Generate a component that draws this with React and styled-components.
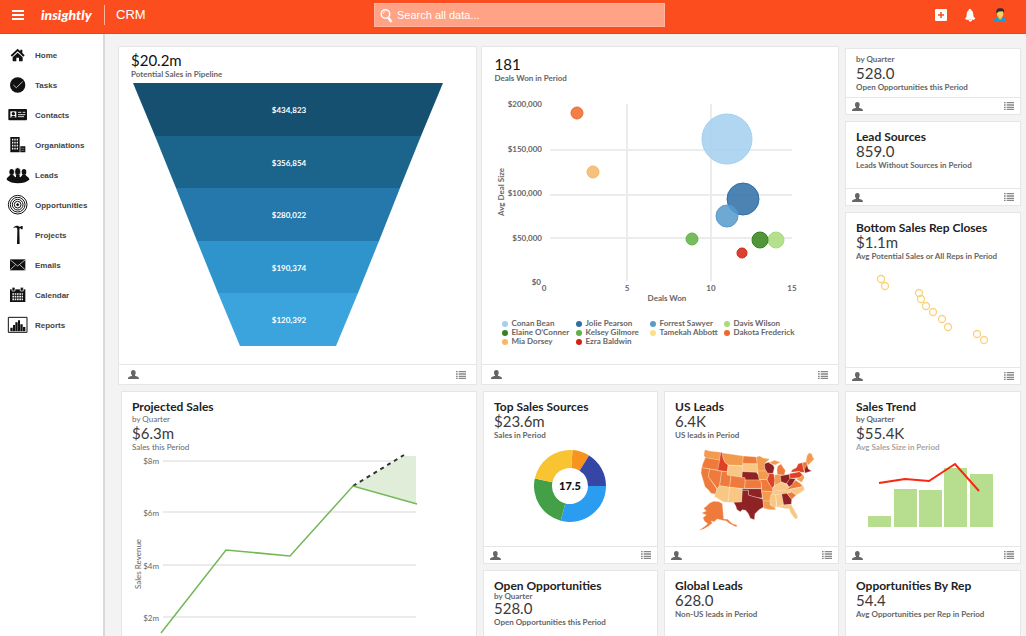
import React from 'react'
import styled, { createGlobalStyle } from 'styled-components'

const DARK = '#8e2224'
const RED = '#dd4227'
const DEEP = '#ee7a3b'
const MID = '#f29a4d'
const PALE = '#f8c784'

const states = [
  [MID, '31,14 43,18 77,22 74,45 33,40 27,32 28,20'],
  [DEEP, '31,38 74,45 70,76 20,68 24,55'],
  [DEEP, '20,68 44,72 40,95 66,133 62,148 48,145 40,134 30,125 24,104 18,84'],
  [DEEP, '44,72 80,79 74,122 67,131 40,95'],
  [RED, '77,22 83,24 84,38 90,52 99,60 97,80 68,76 73,50'],
  [MID, '83,24 145,33 143,62 100,60 90,52 84,38'],
  [PALE, '100,60 144,64 141,97 96,92'],
  [DEEP, '80,79 97,80 96,90 108,92 104,127 74,122'],
  [DEEP, '108,92 151,98 149,131 104,127'],
  [PALE, '74,122 104,127 99,172 84,170 58,154 66,133'],
  [PALE, '104,127 142,131 140,171 99,172'],
  [DEEP, '145,33 184,36 187,56 143,56'],
  [PALE, '143,56 187,57 188,80 186,82 142,80'],
  [DARK, '142,80 184,82 190,90 194,105 151,105 150,98 141,97'],
  [DEEP, '151,105 195,105 199,112 199,130 149,130'],
  [DARK, '142,131 199,131 202,159 188,158 172,154 160,150 160,136 142,136'],
  [DARK, '142,136 160,136 160,150 172,154 188,158 204,162 206,186 192,194 180,206 178,224 166,220 160,206 152,196 142,194 136,200 126,194 122,182 116,172 140,171'],
  [MID, '184,36 194,33 204,39 224,42 208,56 210,72 216,78 188,78 187,58'],
  [MID, '188,78 214,78 222,90 214,104 192,103'],
  [DEEP, '193,104 216,104 222,116 232,128 236,140 200,138 199,112'],
  [MID, '200,138 234,140 226,168 204,168'],
  [MID, '204,168 226,168 226,180 238,184 242,194 226,194 206,190'],
  [DARK, '208,56 220,52 234,60 238,68 234,85 218,85 210,72'],
  [RED, '218,85 236,86 240,104 238,122 231,130 220,112 216,102 222,90'],
  [DEEP, '248,64 258,57 266,70 271,76 268,90 247,89 246,74'],
  [MID, '222,53 238,46 256,52 240,60 234,58'],
  [MID, '239,89 256,89 258,112 240,122'],
  [DARK, '256,92 270,90 283,88 285,102 274,116 258,110'],
  [PALE, '231,132 240,122 258,112 274,118 282,128 268,136 234,139'],
  [PALE, '234,139 292,132 276,146 228,150'],
  [PALE, '227,150 242,149 244,186 230,184 224,170'],
  [PALE, '242,149 260,147 266,178 250,186 246,186'],
  [DARK, '260,147 276,145 290,163 289,178 266,180'],
  [PALE, '248,185 266,180 289,179 298,196 308,214 306,222 298,219 287,203 283,191 268,190'],
  [DEEP, '276,145 290,141 304,150 290,163'],
  [PALE, '292,132 326,124 328,134 318,142 304,150 290,141 276,145'],
  [DEEP, '282,128 291,118 302,106 314,114 324,124 268,136'],
  [DARK, '275,115 285,100 302,101 292,118 282,126'],
  [RED, '283,86 314,80 323,90 314,98 285,100'],
  [RED, '288,82 292,74 304,68 310,56 322,53 328,82 318,82 312,79'],
  [DEEP, '322,53 336,50 338,72 326,73'],
  [DARK, '328,73 336,60 340,72 350,78 330,84'],
  [MID, '333,48 336,32 342,24 350,26 354,38 358,42 340,60'],
  [MID, '324,88 328,98 320,112 302,101 316,98'],
  [DEEP, '36,182 44,174 56,169 72,170 82,176 86,222 98,223 112,236 126,240 124,246 104,236 94,228 76,224 66,222 58,230 48,228 52,234 40,244 26,252 12,256 30,244 38,236 28,228 24,218 34,210 20,204 34,198 26,190'],
]

const slices = [
  ['#f7931e', 4, 32],
  ['#3646a5', 32, 90],
  ['#2b9df0', 90, 195],
  ['#43a047', 195, 282],
  ['#f8c431', 282, 364],
]

const people = [
  ['Conan Bean', '#a3cff0'],
  ['Jolie Pearson', '#2f6fa7'],
  ['Forrest Sawyer', '#569bcc'],
  ['Davis Wilson', '#a9db7b'],
  ['Elaine O’Conner', '#35831b'],
  ['Kelsey Gilmore', '#62b146'],
  ['Tamekah Abbott', '#fbe08c'],
  ['Dakota Frederick', '#f0692a'],
  ['Mia Dorsey', '#f5b766'],
  ['Ezra Baldwin', '#d3230f'],
]

const bubbles = [
  [232, 44, 25, '#a3cff0'],
  [248, 104, 16, '#2f6fa7'],
  [232, 121, 11, '#569bcc'],
  [82, 18, 6, '#f0692a'],
  [98, 77, 6, '#f5b766'],
  [197, 144, 6, '#62b146'],
  [281, 145, 8, '#a9db7b'],
  [265, 145, 8, '#35831b'],
  [247, 158, 5, '#d3230f'],
]

const funnel = [
  ['$434,823', '#155070'],
  ['$356,854', '#1b648b'],
  ['$280,022', '#2478ab'],
  ['$190,374', '#2f94cc'],
  ['$120,392', '#3ba4dc'],
]

const closes = [
  [25, 18],
  [29, 25],
  [63, 32],
  [65, 38],
  [70, 45],
  [77, 51],
  [86, 58],
  [92, 66],
  [121, 73],
  [128, 79],
]

const bars = [
  [12, 64],
  [38, 37],
  [63, 38],
  [88, 16],
  [114, 22],
]

const nav = [
  ['Home', (
    <>
      <path d="M29 11 8 31l4 4 17-16 17 16 4-4-7-7V14h-6v5z" />
      <path d="M29 23 14 37v12h11V38h8v11h11V37z" />
    </>
  )],
  ['Tasks', (
    <>
      <circle cx="29" cy="30" r="23" />
      <path d="m16 30 9 8 19-18" fill="none" stroke="#bbb" strokeWidth="3" />
    </>
  )],
  ['Contacts', (
    <>
      <rect x="1" y="12" width="56" height="34" rx="3" />
      <path d="M7 19h18v19H7z" fill="#fff" />
      <circle cx="16" cy="26" r="5" />
      <path d="M9 38c0-8 14-8 14 0z" />
      <path d="M30 22h10M44 22h8M30 29h22M30 35h18" stroke="#ddd" strokeWidth="3" />
    </>
  )],
  ['Organiations', (
    <>
      <path d="M7 6h28v46H7zM37 34h15v18H37z" />
      <path
        d="M12 14h18M12 23h18M12 32h18M12 41h18"
        stroke="#fff"
        strokeDasharray="4 3"
        strokeWidth="5"
      />
      <path d="M40 40h9M40 46h9" stroke="#999" strokeWidth="2" />
    </>
  )],
  ['Leads', (
    <>
      <ellipse cx="11" cy="21" rx="7" ry="9" />
      <ellipse cx="48" cy="21" rx="7" ry="9" />
      <path d="M-4 44c0-9 8-8 10-15h10c2 6 6 5 8 9l12 0c2-4 5-4 7-9h10c2 7 11 6 11 15-15 14-53 14-68 0z" />
      <ellipse cx="29" cy="20" rx="9" ry="12" stroke="#fff" strokeWidth="2" />
      <path d="M24 30h11v6c4 3 9 4 10 9-10 7-22 7-31 0 1-5 6-6 10-9z" />
    </>
  )],
  ['Opportunities', (
    <g fill="none" stroke="#111" strokeWidth="3">
      <circle cx="29" cy="29" r="28" />
      <circle cx="29" cy="29" r="22" />
      <circle cx="29" cy="29" r="16" />
      <circle cx="29" cy="29" r="10" />
      <circle cx="29" cy="29" r="3" fill="#111" />
    </g>
  )],
  ['Projects', (
    <path d="M15 10C18 4 24 1 31 3l3 2h3l3-2h4v10h-4l-3-3h-2l-1 6 1 41h-8l1-41-1-7c-5-2-8-2-12 1z" />
  )],
  ['Emails', (
    <>
      <path d="M6 13h46v33H6z" />
      <path d="m7 15 22 18 22-18M7 44l16-15M51 44 35 29" fill="none" stroke="#fff" strokeWidth="2" />
    </>
  )],
  ['Calendar', (
    <>
      <path d="M6 13h46v38H6z" />
      <path d="M12 7h9v11h-9zM37 7h9v11h-9z" stroke="#fff" strokeWidth="2" />
      <path
        d="M13 27h32M13 35h32M13 43h32"
        stroke="#eee"
        strokeDasharray="5 2"
        strokeWidth="5"
      />
    </>
  )],
  ['Reports', (
    <>
      <path d="M1 7h56v45H1z" fill="#fff" stroke="#111" strokeWidth="3" />
      <path d="M7 38h7v11H7zM15 30h6v19h-6zM22 22h7v27h-7zM30 16h6v33h-6zM37 28h7v21h-7zM45 36h7v13h-7z" />
    </>
  )],
]

const ring = (from, to) => {
  const at = (r, deg) => {
    const a = (deg * Math.PI) / 180
    return `${36 + r * Math.sin(a)} ${36 - r * Math.cos(a)}`
  }
  return `M${at(36, from)}A36 36 0 0 1 ${at(36, to)}L${at(18, to)}A18 18 0 0 0 ${at(18, from)}Z`
}

function CardFooter({ tall }) {
  return (
    <Footer $tall={tall}>
      <IconButton aria-label="Owner">
        <svg width="11" height="9" viewBox="0 0 33 27" fill="#666">
          <ellipse cx="16" cy="8" rx="7" ry="8" />
          <path d="M12 13h9v4c6 2 12 2 12 10H0c0-8 6-8 12-10z" />
        </svg>
      </IconButton>
      <IconButton aria-label="View list">
        <svg width="10" height="8" viewBox="0 0 30 24" stroke="#888" strokeWidth="4">
          <path d="M0 2h5M8 2h22M0 9h5M8 9h22M0 16h5M8 16h22M0 22h5M8 22h22" />
        </svg>
      </IconButton>
    </Footer>
  )
}

function Metric({ title, period, tight, value, caption, muted, thin, strong }) {
  return (
    <header>
      {title && <Title>{title}</Title>}
      {period && <Period $tight={tight} $thin={thin}>{period}</Period>}
      <Value $strong={strong}>{value}</Value>
      <Caption $muted={muted} $thin={thin}>{caption}</Caption>
    </header>
  )
}

function Funnel() {
  // Each band narrows at the same slope towards the bottom of the funnel.
  const edges = [0, 53, 105, 158, 210, 263]
  const inset = (y) => Math.round((y * 107) / 263)
  return (
    <FunnelChart width="310" height="263" viewBox="0 0 310 263">
      {funnel.map(([label, color], i) => {
        const a = edges[i]
        const b = edges[i + 1]
        return (
          <g key={label}>
            <path
              d={`M${inset(a)} ${a}H${310 - inset(a)}L${310 - inset(b)} ${b}H${inset(b)}Z`}
              fill={color}
            />
            <text x="156" y={a + 30} textAnchor="middle">{label}</text>
          </g>
        )
      })}
    </FunnelChart>
  )
}

function DealsChart() {
  return (
    <BubbleChart width="310" height="210" viewBox="0 0 310 210">
      <path
        d="M55 55H297M55 100H297M55 143H297M132 9V186M216 9V186"
        stroke="#ececec"
        strokeWidth="2"
      />
      {bubbles.map(([x, y, r, color]) => (
        <circle
          key={color}
          cx={x}
          cy={y}
          r={r}
          fill={color}
          fillOpacity="0.86"
          stroke={color}
        />
      ))}
      <g textAnchor="end">
        <text x="47" y="12">$200,000</text>
        <text x="47" y="57">$150,000</text>
        <text x="47" y="101">$100,000</text>
        <text x="47" y="146">$50,000</text>
        <text x="46" y="190">$0</text>
      </g>
      <g textAnchor="middle">
        <text x="49" y="196">0</text>
        <text x="132" y="196">5</text>
        <text x="216" y="196">10</text>
        <text x="297" y="196">15</text>
        <text x="172" y="206">Deals Won</text>
        <text transform="translate(9 97) rotate(-90)">Avg Deal Size</text>
      </g>
    </BubbleChart>
  )
}

function ProjectedChart() {
  return (
    <LineChart width="300" height="186" viewBox="0 0 300 186">
      <path
        d="M31 9H284M31 60H284M31 113H284M31 165H284"
        stroke="#ebebeb"
        strokeWidth="2"
      />
      <path d="M221 34 272 4H284V52Z" fill="#e0eed9" />
      <path d="m221 34 51-31" stroke="#333" strokeWidth="2" strokeDasharray="4 4" />
      <path
        d="m29 181 65-83 64 6 63-70 64 18"
        fill="none"
        stroke="#73b757"
        strokeWidth="1.5"
      />
      <g textAnchor="end">
        <text x="27" y="12">$8m</text>
        <text x="27" y="64">$6m</text>
        <text x="27" y="117">$4m</text>
        <text x="27" y="169">$2m</text>
      </g>
      <text textAnchor="middle" transform="translate(9 112) rotate(-90)">Sales Revenue</text>
    </LineChart>
  )
}

function App() {
  return (
    <Page>
      <GlobalStyle />
      <TopBar>
        <Brand>
          <MenuButton aria-label="Menu">
            <svg width="12" height="10" viewBox="0 0 12 10" fill="#fff">
              <path d="M0 0h12v2H0zM0 4h12v2H0zM0 8h12v2H0z" />
            </svg>
          </MenuButton>
          <Logo href="#">insightly</Logo>
          <Product>CRM</Product>
        </Brand>
        <Search>
          <svg width="13" height="15" viewBox="0 0 36 42" fill="none" stroke="#fff">
            <circle cx="15" cy="17" r="12" strokeWidth="4" />
            <path d="M8 17a7 7 0 0 1 7-7" strokeWidth="2" />
            <path d="m23 27 9 12" strokeWidth="7" />
          </svg>
          <SearchInput aria-label="Search" placeholder="Search all data..." />
        </Search>
        <Actions>
          <IconButton aria-label="Add">
            <svg width="12" height="12" viewBox="0 0 12 12">
              <rect width="12" height="12" rx="1" fill="#fff" />
              <path d="M6 3v6M3 6h6" stroke="#fb4a1c" strokeWidth="1.5" />
            </svg>
          </IconButton>
          <IconButton aria-label="Notifications">
            <svg width="12" height="13" viewBox="0 0 36 39" fill="#fff">
              <path d="M18 0c3 0 4 2 4 4 5 3 6 9 6 15 0 5 3 7 6 10l-4 3H7l-4-3c3-3 5-5 5-10 0-7 1-12 6-15 0-2 1-4 4-4zM14 33h10c0 6-10 6-10 0z" />
            </svg>
          </IconButton>
          <IconButton aria-label="Account">
            <svg width="14" height="14" viewBox="-2 0 39 39">
              <path d="M0 39c0-9 5-12 11-13h13c6 1 11 4 11 13z" fill="#1e9ad6" />
              <path d="M13 22h10v7l-5 4-5-4z" fill="#e9b949" />
              <ellipse cx="18" cy="15" rx="9" ry="11" fill="#f6cf65" />
              <path d="M8 15C5 5 11 0 19 1c9-1 12 6 9 14l-2-6-12 1z" fill="#2b2f38" />
            </svg>
          </IconButton>
        </Actions>
      </TopBar>
      <Shell>
        <Sidebar>
          {nav.map(([label, icon]) => (
            <NavLink key={label} href="#">
              <NavIcon viewBox="0 0 60 60">{icon}</NavIcon>
              {label}
            </NavLink>
          ))}
        </Sidebar>
        <Dashboard>
          <Primary>
            <Highlights>
              <Card>
                <FunnelBody>
                  <Metric strong value="$20.2m" caption="Potential Sales in Pipeline" />
                  <Funnel />
                </FunnelBody>
                <CardFooter tall />
              </Card>
              <Card>
                <DealsBody>
                  <Metric strong value="181" caption="Deals Won in Period" />
                  <DealsChart />
                  <Legend>
                    {people.map(([name, color]) => (
                      <LegendItem key={name} $color={color}>{name}</LegendItem>
                    ))}
                  </Legend>
                </DealsBody>
                <CardFooter tall />
              </Card>
            </Highlights>
            <Details>
              <Card>
                <Body>
                  <Metric
                    title="Projected Sales"
                    period="by Quarter"
                    thin
                    value="$6.3m"
                    caption="Sales this Period"
                  />
                  <ProjectedChart />
                </Body>
              </Card>
              <Column>
                <Card>
                  <Body>
                    <Metric title="Top Sales Sources" value="$23.6m" caption="Sales in Period" />
                    <Donut width="72" height="72" viewBox="0 0 72 72">
                      {slices.map(([color, from, to]) => (
                        <path key={color} d={ring(from, to)} fill={color} />
                      ))}
                      <text x="36" y="40" textAnchor="middle">17.5</text>
                    </Donut>
                  </Body>
                  <CardFooter />
                </Card>
                <Card>
                  <Body>
                    <Metric
                      title="Open Opportunities"
                      period="by Quarter"
                      tight
                      value="528.0"
                      caption="Open Opportunities this Period"
                    />
                  </Body>
                </Card>
              </Column>
              <Column>
                <Card>
                  <Body>
                    <Metric title="US Leads" value="6.4K" caption="US leads in Period" />
                    <StateMap width="125" height="106" viewBox="0 -15 375 318">
                      {states.map(([color, points]) => (
                        <polygon key={points} points={points} fill={color} />
                      ))}
                    </StateMap>
                  </Body>
                  <CardFooter />
                </Card>
                <Card>
                  <Body>
                    <Metric title="Global Leads" value="628.0" caption="Non-US leads in Period" />
                  </Body>
                </Card>
              </Column>
            </Details>
          </Primary>
          <Secondary>
            <Card>
              <QuarterBody>
                <Metric period="by Quarter" value="528.0" caption="Open Opportunities this Period" />
              </QuarterBody>
              <CardFooter />
            </Card>
            <Card>
              <SourcesBody>
                <Metric title="Lead Sources" value="859.0" caption="Leads Without Sources in Period" />
              </SourcesBody>
              <CardFooter />
            </Card>
            <Card>
              <Body>
                <Metric
                  title="Bottom Sales Rep Closes"
                  value="$1.1m"
                  caption="Avg Potential Sales or All Reps in Period"
                />
                <Chart width="150" height="106" viewBox="0 0 150 106">
                  {closes.map(([x, y]) => (
                    <circle
                      key={x}
                      cx={x}
                      cy={y}
                      r="3.5"
                      fill="none"
                      stroke="#fbd27c"
                      strokeWidth="1.3"
                    />
                  ))}
                </Chart>
              </Body>
              <CardFooter />
            </Card>
            <Card>
              <Body>
                <Metric
                  title="Sales Trend"
                  period="by Quarter"
                  muted
                  value="$55.4K"
                  caption="Avg Sales Size in Period"
                />
                <Chart width="150" height="94" viewBox="0 0 150 94">
                  {bars.map(([x, y]) => (
                    <rect key={x} x={x} y={y} width="23" height={75 - y} fill="#b6de8e" />
                  ))}
                  <path d="m23 31 26-4 24 2 26-17 24 27" fill="none" stroke="#fb2610" strokeWidth="2" />
                </Chart>
              </Body>
              <CardFooter />
            </Card>
            <Card>
              <Body>
                <Metric
                  title="Opportunities By Rep"
                  value="54.4"
                  caption="Avg Opportunities per Rep in Period"
                />
              </Body>
            </Card>
          </Secondary>
        </Dashboard>
      </Shell>
    </Page>
  )
}

const GlobalStyle = createGlobalStyle`
  * {
    box-sizing: border-box;
  }

  body {
    background: #f3f3f3;
    font-family: Lato, "Liberation Sans", sans-serif;
    margin: 0;
  }
`

const Page = styled.div`
  display: flex;
  flex-direction: column;
  height: 100vh;
  overflow: hidden;
`

const TopBar = styled.header`
  align-items: center;
  background: #fc4d1f;
  border-bottom: 1px solid #f5410c;
  display: flex;
  flex-shrink: 0;
  font-family: "Liberation Sans", Arial, sans-serif;
  height: 34px;
  padding: 0 19px 3px 12px;
`

const Brand = styled.div`
  align-items: center;
  display: flex;
  flex: 0 0 362px;
`

const IconButton = styled.button`
  background: none;
  border: 0;
  cursor: pointer;
  display: flex;
  padding: 0;
`

const MenuButton = styled(IconButton)`
  margin-right: 17px;
`

const Logo = styled.a`
  color: #fff;
  font-family: Lato, sans-serif;
  font-size: 14px;
  font-style: italic;
  font-weight: 900;
  line-height: 20px;
  text-decoration: none;
  width: 63px;
`

const Product = styled.span`
  border-left: 1px solid #ffb39d;
  color: #fff;
  font-size: 13px;
  line-height: 20px;
  padding-left: 11px;
`

const Search = styled.label`
  align-items: center;
  background: #ffa286;
  border: 1px solid #ffb49d;
  display: flex;
  flex: 0 1 291px;
  gap: 4px;
  height: 24px;
  padding: 0 5px;
`

const SearchInput = styled.input`
  background: none;
  border: 0;
  color: #fff;
  flex: 1;
  font-family: inherit;
  font-size: 11px;
  min-width: 0;
  outline: 0;
  padding: 0;

  &::placeholder {
    color: #fff;
    opacity: 1;
  }
`

const Actions = styled.div`
  align-items: center;
  display: flex;
  gap: 17px;
  margin-left: auto;
`

const Shell = styled.div`
  display: flex;
  flex: 1;
  min-height: 0;
`

const Sidebar = styled.nav`
  background: #fff;
  border-right: 2px solid #d9d9d9;
  flex: 0 0 105px;
  padding-top: 6px;
`

const NavLink = styled.a`
  align-items: center;
  color: #444;
  display: flex;
  font-family: "Liberation Sans", Arial, sans-serif;
  font-size: 8px;
  font-weight: bold;
  gap: 7px;
  height: 30px;
  padding-left: 8px;
  text-decoration: none;
`

const NavIcon = styled.svg`
  fill: #111;
  height: 20px;
  overflow: visible;
  width: 20px;
`

const Dashboard = styled.main`
  display: grid;
  flex: 1;
  gap: 6px;
  grid-template-columns: minmax(0, 721fr) minmax(0, 176fr);
  overflow: hidden;
  padding: 12px 5px 0 13px;
`

const Column = styled.div`
  display: flex;
  flex-direction: column;
  gap: 6px;
`

const Primary = styled(Column)``

const Secondary = styled(Column)`
  padding-top: 2px;
`

const Highlights = styled.div`
  display: grid;
  gap: 4px;
  grid-template-columns: repeat(2, minmax(0, 1fr));
`

const Details = styled.div`
  display: grid;
  flex: 1;
  gap: 6px;
  grid-template-columns: minmax(0, 356fr) minmax(0, 175fr) minmax(0, 175fr);
  padding-left: 3px;
`

const Card = styled.section`
  background: #fff;
  border: 1px solid #e6e6e6;
  display: flex;
  flex-direction: column;

  &:last-child {
    flex-grow: 1;
  }
`

const Body = styled.div`
  flex: 1;
  padding: 8px 0 0 10px;
`

const FunnelBody = styled(Body)`
  padding: 5px 12px 18px;
`

const DealsBody = styled(Body)`
  padding: 9px 13px 18px;
`

const QuarterBody = styled(Body)`
  padding: 4px 0 5px 10px;
`

const SourcesBody = styled(Body)`
  padding-bottom: 18px;
`

const Footer = styled.footer`
  align-items: center;
  border-top: 1px solid #e6e6e6;
  display: flex;
  height: ${(p) => (p.$tall ? '20px' : '17px')};
  justify-content: space-between;
  padding: ${(p) => (p.$tall ? '0 10px 0 9px' : '0 6px')};
`

const Title = styled.h2`
  color: #222;
  font-size: 12px;
  font-weight: bold;
  line-height: 13px;
  margin: 0;
  white-space: nowrap;
`

const Period = styled.div`
  color: #666;
  font-size: 8px;
  font-weight: ${(p) => (p.$thin ? 'normal' : 'bold')};
  line-height: ${(p) => (p.$tight ? '8px' : '12px')};
`

const Value = styled.div`
  color: ${(p) => (p.$strong ? '#111' : '#3a3a3a')};
  font-size: 15px;
  line-height: 17px;
`

const Caption = styled.div`
  color: ${(p) => (p.$muted ? '#a5a5a5' : '#666')};
  font-size: 8px;
  font-weight: ${(p) => (p.$thin ? 'normal' : 'bold')};
  line-height: 10px;
  white-space: nowrap;
`

const Chart = styled.svg`
  display: block;
  font-size: 8px;
  font-weight: bold;
  max-width: 100%;
`

const FunnelChart = styled(Chart)`
  fill: #fff;
  margin: 4px 0 0 2px;
`

const BubbleChart = styled(Chart)`
  fill: #666;
  margin-top: 12px;
`

const LineChart = styled(Chart)`
  fill: #666;
  font-weight: normal;
`

const Donut = styled(Chart)`
  fill: #111;
  font-size: 11px;
  font-weight: 900;
  margin: 10px auto 24px 40px;
`

const StateMap = styled(Chart)`
  margin-left: 20px;
  stroke: #fbe3cc;
  stroke-width: 1px;
`

const Legend = styled.ul`
  display: grid;
  grid-template-columns: repeat(4, 74px);
  list-style: none;
  margin: 14px 0 0;
  padding: 0 0 0 7px;
`

const LegendItem = styled.li`
  align-items: center;
  color: #666;
  display: flex;
  font-size: 8px;
  font-weight: bold;
  gap: 4px;
  line-height: 9px;
  white-space: nowrap;

  &::before {
    background: ${(p) => p.$color};
    border-radius: 50%;
    content: '';
    height: 6px;
    width: 6px;
  }
`

export default App
